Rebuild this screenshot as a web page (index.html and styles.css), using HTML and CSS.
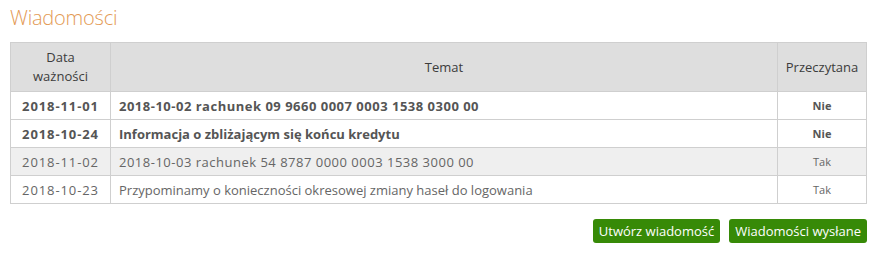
FILE: index.html
```html
<!DOCTYPE html>
<html lang="pl">
<head>
<meta charset="utf-8">
<link rel="stylesheet" href="styles.css">
</head>
<body>
<div class="page">
  <h1 class="title">Wiadomości</h1>
  <table class="messages">
    <thead>
      <tr>
        <th class="c-date">Data<br>ważności</th>
        <th class="c-subject">Temat</th>
        <th class="c-read">Przeczytana</th>
      </tr>
    </thead>
    <tbody>
      <tr class="unread">
        <td class="c-date">2018-11-01</td>
        <td class="c-subject"><span class="numeric">2018-10-02 rachunek 09 9660 0007 0003 1538 0300 00</span></td>
        <td class="c-read">Nie</td>
      </tr>
      <tr class="unread">
        <td class="c-date">2018-10-24</td>
        <td class="c-subject">Informacja o zbliżającym się końcu kredytu</td>
        <td class="c-read">Nie</td>
      </tr>
      <tr class="read striped">
        <td class="c-date">2018-11-02</td>
        <td class="c-subject"><span class="numeric">2018-10-03 rachunek 54 8787 0000 0003 1538 3000 00</span></td>
        <td class="c-read">Tak</td>
      </tr>
      <tr class="read">
        <td class="c-date">2018-10-23</td>
        <td class="c-subject">Przypominamy o konieczności okresowej zmiany haseł do logowania</td>
        <td class="c-read">Tak</td>
      </tr>
    </tbody>
  </table>
  <div class="actions">
    <button class="btn">Utwórz wiadomość</button>
    <button class="btn">Wiadomości wysłane</button>
  </div>
</div>
</body>
</html>
```
FILE: styles.css
```css
html, body {
  margin: 0;
  padding: 0;
  background: #fff;
}
body {
  font-family: "Open Sans", "Noto Sans", sans-serif;
  color: #555;
}
.page {
  width: 857px;
  padding: 0 0 0 10px;
}
.title {
  margin: 0;
  padding-top: 4px;
  height: 42px;
  box-sizing: border-box;
  font-size: 20px;
  line-height: 28px;
  font-weight: 300;
  color: #e39a55;
  letter-spacing: -0.2px;
}
.messages {
  width: 857px;
  border-collapse: collapse;
  border: 1px solid #cfcfcf;
  font-size: 13px;
}
.messages th {
  background: #dedede;
  font-weight: 400;
  font-size: 13px;
  color: #3c3c3c;
  line-height: 19px;
  padding: 5px 4px;
  border: 1px solid #cfcfcf;
  height: 38px;
}
.messages td {
  border: 1px solid #cfcfcf;
  line-height: 18px;
  padding: 5px 8px 4px;
  height: 18px;
}
.c-date {
  width: 83px;
  text-align: center;
}
.messages td.c-date {
  letter-spacing: 0.9px;
}
.messages th.c-date { width: 91px; }
.messages td.c-subject { text-align: left; }
.numeric {
  letter-spacing: 0.5px;
}
.c-read {
  width: 72px;
  text-align: center;
}
.messages th.c-read { width: 80px; }
.messages td.c-read {
  font-size: 11px;
}
.unread td {
  font-weight: 700;
  color: #555;
}
.read td {
  color: #666;
}
.striped td {
  background: #efefef;
}
.actions {
  display: flex;
  justify-content: flex-end;
  gap: 9px;
  margin-top: 15px;
}
.btn {
  font-family: "Open Sans", "Noto Sans", sans-serif;
  font-size: 13px;
  line-height: 24px;
  height: 24px;
  padding: 0 6px;
  border: none;
  border-radius: 3px;
  background: #378a07;
  color: #fff;
  cursor: pointer;
}
```
